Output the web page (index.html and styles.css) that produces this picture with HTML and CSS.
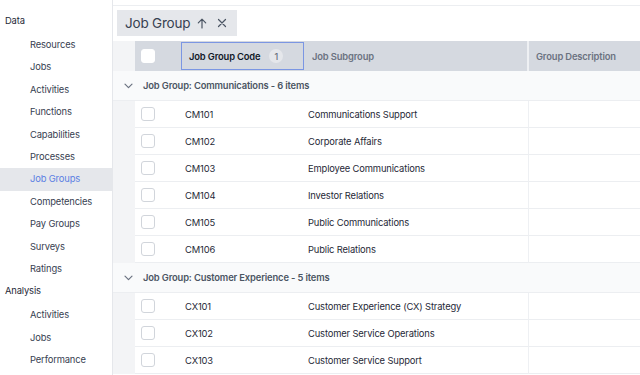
FILE: index.html
```html
<!DOCTYPE html>
<html>
<head>
<meta charset="utf-8">
<link rel="stylesheet" href="styles.css">
</head>
<body>
<div class="app">
  <nav class="sidebar">
    <div class="sec">Data</div>
    <ul class="items">
      <li>Resources</li>
      <li>Jobs</li>
      <li>Activities</li>
      <li>Functions</li>
      <li>Capabilities</li>
      <li>Processes</li>
      <li class="active">Job Groups</li>
      <li>Competencies</li>
      <li>Pay Groups</li>
      <li>Surveys</li>
      <li>Ratings</li>
    </ul>
    <div class="sec">Analysis</div>
    <ul class="items">
      <li>Activities</li>
      <li>Jobs</li>
      <li>Performance</li>
    </ul>
  </nav>
  <main class="main">
    <div class="grid">
      <div class="group-panel">
        <div class="chip">
          <span class="chip-label">Job Group</span>
          <svg class="chip-icon" width="10" height="11" viewBox="0 0 10 11"><path d="M5 10V1.2M1.3 4.8L5 1.1l3.7 3.7" fill="none" stroke="#4b5563" stroke-width="1.2" stroke-linecap="round" stroke-linejoin="round"/></svg>
          <svg class="chip-icon" width="10" height="10" viewBox="0 0 10 10"><path d="M1.5 1.5l7 7M8.5 1.5l-7 7" fill="none" stroke="#4b5563" stroke-width="1.2" stroke-linecap="round"/></svg>
        </div>
      </div>
      <div class="hdr">
        <div class="strip"></div>
        <div class="c-check"><span class="cb cb-hdr"></span></div>
        <div class="c-code hcell sorted">Job Group Code <span class="badge">1</span></div>
        <div class="c-sub hcell">Job Subgroup</div>
        <div class="c-desc hcell">Group Description</div>
      </div>
      <div class="grp">
        <svg class="chev" width="9" height="6" viewBox="0 0 9 6"><path d="M1 1.2l3.5 3.5L8 1.2" fill="none" stroke="#6b7280" stroke-width="1.2" stroke-linecap="round" stroke-linejoin="round"/></svg>
        <span>Job Group: Communications - 6 items</span>
      </div>
      <div class="row"><div class="strip"></div><div class="c-check"><span class="cb"></span></div><div class="c-code">CM101</div><div class="c-sub">Communications Support</div><div class="c-desc"></div></div>
      <div class="row"><div class="strip"></div><div class="c-check"><span class="cb"></span></div><div class="c-code">CM102</div><div class="c-sub">Corporate Affairs</div><div class="c-desc"></div></div>
      <div class="row"><div class="strip"></div><div class="c-check"><span class="cb"></span></div><div class="c-code">CM103</div><div class="c-sub">Employee Communications</div><div class="c-desc"></div></div>
      <div class="row"><div class="strip"></div><div class="c-check"><span class="cb"></span></div><div class="c-code">CM104</div><div class="c-sub">Investor Relations</div><div class="c-desc"></div></div>
      <div class="row"><div class="strip"></div><div class="c-check"><span class="cb"></span></div><div class="c-code">CM105</div><div class="c-sub">Public Communications</div><div class="c-desc"></div></div>
      <div class="row"><div class="strip"></div><div class="c-check"><span class="cb"></span></div><div class="c-code">CM106</div><div class="c-sub">Public Relations</div><div class="c-desc"></div></div>
      <div class="grp">
        <svg class="chev" width="9" height="6" viewBox="0 0 9 6"><path d="M1 1.2l3.5 3.5L8 1.2" fill="none" stroke="#6b7280" stroke-width="1.2" stroke-linecap="round" stroke-linejoin="round"/></svg>
        <span>Job Group: Customer Experience - 5 items</span>
      </div>
      <div class="row"><div class="strip"></div><div class="c-check"><span class="cb"></span></div><div class="c-code">CX101</div><div class="c-sub">Customer Experience (CX) Strategy</div><div class="c-desc"></div></div>
      <div class="row"><div class="strip"></div><div class="c-check"><span class="cb"></span></div><div class="c-code">CX102</div><div class="c-sub">Customer Service Operations</div><div class="c-desc"></div></div>
      <div class="row"><div class="strip"></div><div class="c-check"><span class="cb"></span></div><div class="c-code">CX103</div><div class="c-sub">Customer Service Support</div><div class="c-desc"></div></div>
    </div>
  </main>
</div>
</body>
</html>
```
FILE: styles.css
```css
* { box-sizing: border-box; }
html, body { margin: 0; padding: 0; }
body {
  font-family: Inter, "Noto Sans", sans-serif;
  font-size: 9.4px;
  letter-spacing: -0.15px;
  color: #1f2937;
  background: #fff;
}
.app {
  display: flex;
  height: 375px;
  overflow: hidden;
}
.sidebar {
  width: 113px;
  flex: none;
  border-right: 1px solid #e5e7eb;
  background: #fff;
  padding-top: 10px;
}
.sec {
  height: 22px;
  line-height: 22px;
  padding-left: 5px;
  color: #1f2937;
  margin-bottom: 2px;
}
.items {
  list-style: none;
  margin: 0;
  padding: 0;
}
.items li {
  height: 22.4px;
  line-height: 22.4px;
  padding-left: 30px;
  color: #374151;
}
.items li.active {
  background: #e5e7eb;
  color: #5b7fe3;
}
.main {
  flex: 1;
  min-width: 0;
  padding-top: 5px;
  background: #fff;
}
.grid {
  border-top: 1px solid #eceef1;
  display: flex;
  flex-direction: column;
}
.group-panel {
  height: 35px;
  padding: 4px 4px;
  display: flex;
  align-items: flex-start;
}
.chip {
  flex: none;
  height: 26px;
  width: 120px;
  background: #e5e7eb;
  display: flex;
  align-items: center;
  padding-left: 8px;
  white-space: nowrap;
}
.chip-label {
  font-size: 13.5px;
  letter-spacing: -0.2px;
  color: #374151;
  margin-right: 7px;
}
.chip-icon { margin-right: 10px; flex: none; }
.hdr {
  display: flex;
  height: 30px;
  background: #d5d9e0;
  font-weight: 600;
  color: #6b7280;
}
.hdr .strip { background: #f3f4f6; }
.strip {
  width: 22px;
  flex: none;
  background: #f3f4f6;
}
.c-check {
  width: 46px;
  flex: none;
  display: flex;
  align-items: center;
  padding-left: 6px;
}
.c-code {
  width: 123px;
  flex: none;
  padding-left: 4px;
  display: flex;
  align-items: center;
  white-space: nowrap;
}
.c-sub {
  width: 225px;
  flex: none;
  padding-left: 4px;
  display: flex;
  align-items: center;
  border-right: 1px solid #eef0f3;
  white-space: nowrap;
}
.c-desc {
  flex: 1;
  padding-left: 7px;
  display: flex;
  align-items: center;
  white-space: nowrap;
}
.hcell { height: 30px; }
.hdr .c-sub { border-right: 2px solid #eef0f3; padding-left: 8px; }
.hdr .c-code.sorted {
  border: 1px solid #7b96e3;
  height: 28px;
  margin-top: 1px;
  color: #111827;
  padding-left: 7px;
}
.badge {
  display: inline-flex;
  align-items: center;
  justify-content: center;
  width: 14px;
  height: 14px;
  border-radius: 7px;
  background: #e5e7eb;
  color: #6b7280;
  font-weight: 500;
  font-size: 9px;
  letter-spacing: 0;
  margin-left: 9px;
}
.cb {
  display: inline-block;
  width: 14px;
  height: 14px;
  border: 1px solid #d1d5db;
  border-radius: 3px;
  background: #fff;
}
.cb-hdr { border-color: #fff; }
.grp {
  height: 30px;
  display: flex;
  align-items: center;
  background: #f9fafb;
  border-bottom: 1px solid #eceef1;
  font-weight: 600;
  color: #4b5563;
  padding-left: 11px;
  white-space: nowrap;
}
.chev { margin-right: 10px; flex: none; }
.row {
  display: flex;
  height: 27px;
  color: #1f2937;
}
.row > .c-check, .row > .c-code, .row > .c-sub, .row > .c-desc {
  border-bottom: 1px solid #eceef1;
}
```
